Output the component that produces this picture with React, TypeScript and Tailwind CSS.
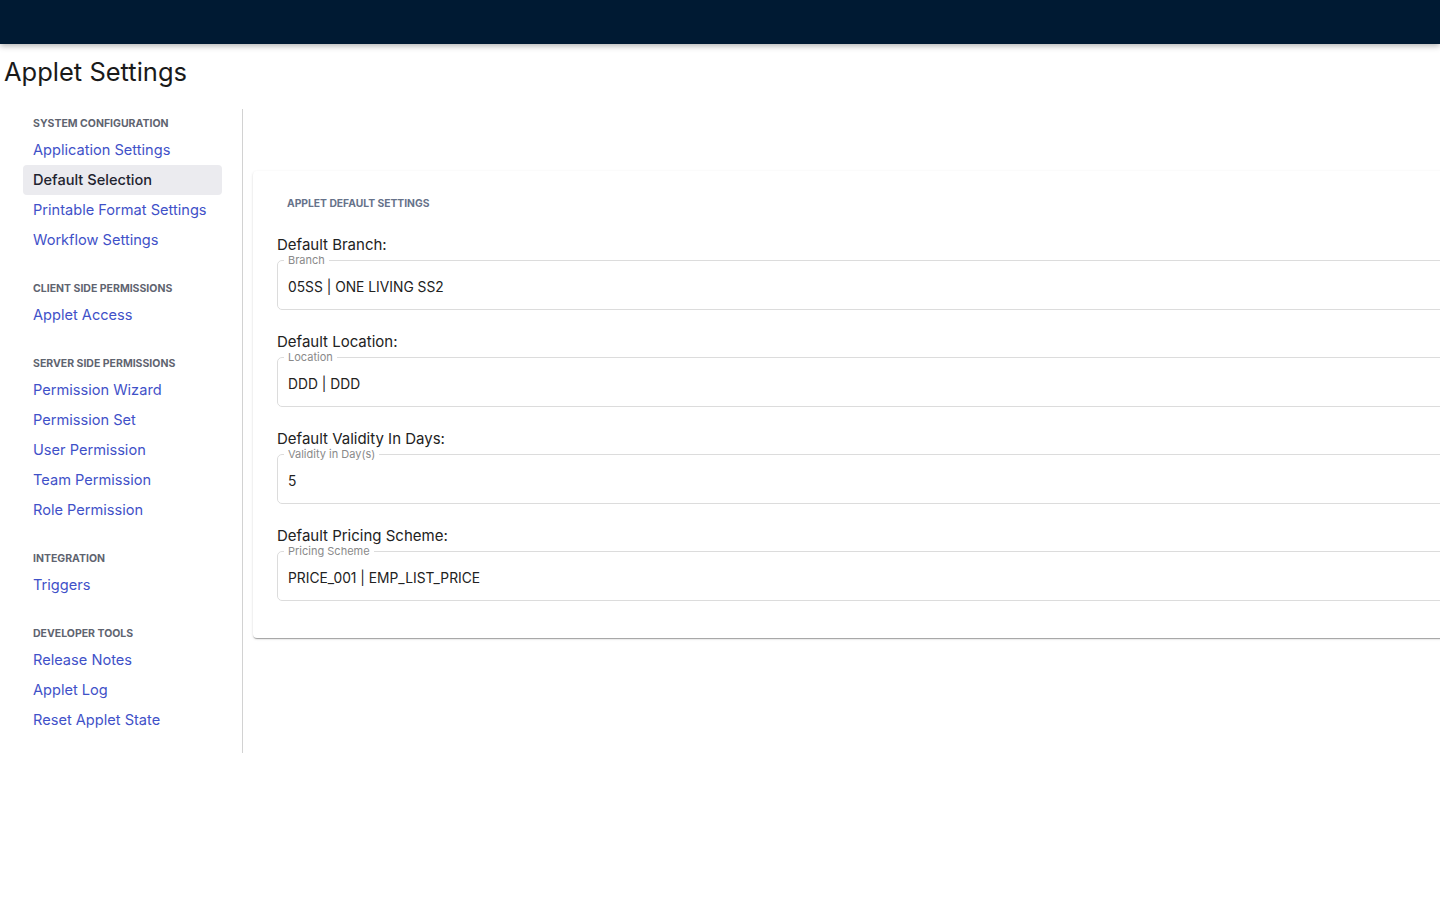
import React from 'react';

type NavSection = {
  title: string;
  items: string[];
};

const navSections: NavSection[] = [
  {
    title: 'System Configuration',
    items: ['Application Settings', 'Default Selection', 'Printable Format Settings', 'Workflow Settings'],
  },
  { title: 'Client Side Permissions', items: ['Applet Access'] },
  {
    title: 'Server Side Permissions',
    items: ['Permission Wizard', 'Permission Set', 'User Permission', 'Team Permission', 'Role Permission'],
  },
  { title: 'Integration', items: ['Triggers'] },
  { title: 'Developer Tools', items: ['Release Notes', 'Applet Log', 'Reset Applet State'] },
];

const fields = [
  { label: 'Default Branch:', legend: 'Branch', value: '05SS | ONE LIVING SS2' },
  { label: 'Default Location:', legend: 'Location', value: 'DDD | DDD' },
  { label: 'Default Validity In Days:', legend: 'Validity in Day(s)', value: '5' },
  { label: 'Default Pricing Scheme:', legend: 'Pricing Scheme', value: 'PRICE_001 | EMP_LIST_PRICE' },
];

const ACTIVE = 'Default Selection';

const App = () => {
  return (
    <div className="min-h-[900px] w-full overflow-hidden bg-white font-['Inter',sans-serif] text-[#212121]">
      {/* top bar */}
      <div className="relative z-10 h-[44px] bg-[#001a33] shadow-[0_2px_6px_rgba(0,0,0,0.3)]" />

      {/* page title */}
      <div className="h-[65px] pl-[4px] pt-[12px]">
        <h1 className="text-[25.5px] leading-[32px] font-normal text-[#1a1a1a]">Applet Settings</h1>
      </div>

      <div className="flex items-start">
        {/* sidebar */}
        <nav className="w-[243px] shrink-0 border-r border-[#d2d2d2] pt-[7px] pb-[18px] pl-[23px] pr-[20px]">
          <div className="flex flex-col gap-[26px]">
            {navSections.map((section) => (
              <div key={section.title}>
                <div className="mb-[3px] h-[16px] px-[10px] text-[10.5px] leading-[16px] font-bold uppercase text-[#5f6470]">
                  {section.title}
                </div>
                {section.items.map((item) => (
                  <div
                    key={item}
                    className={
                      item === ACTIVE
                        ? 'h-[30px] rounded-[4px] bg-[#ebebef] px-[10px] text-[14.6px] leading-[30px] font-medium text-[#1f2430]'
                        : 'h-[30px] px-[10px] text-[14.6px] leading-[30px] text-[#3f51c8]'
                    }
                  >
                    {item}
                  </div>
                ))}
              </div>
            ))}
          </div>
        </nav>

        {/* content */}
        <div className="ml-[10px] mt-[62px] w-[1300px] shrink-0">
          <div className="rounded-[4px] bg-white pt-[25px] pb-[37px] pl-[24px] shadow-[0_2px_1px_-1px_rgba(0,0,0,0.2),0_1px_1px_0_rgba(0,0,0,0.14),0_1px_3px_0_rgba(0,0,0,0.12)]">
            <div className="ml-[10px] text-[10.3px] leading-[14px] font-bold uppercase text-[#66728a]">
              Applet Default Settings
            </div>
            <div className="mt-[26px] flex flex-col gap-[23px]">
              {fields.map((f) => (
                <div key={f.label}>
                  <div className="text-[15px] leading-[18px] text-[#222]">{f.label}</div>
                  <fieldset className="h-[56px] rounded-[5px] border border-[#dcdcdc] px-[6px]">
                    <legend className="px-[4px] text-[11px] leading-[12px] text-[#8a8a8a]">{f.legend}</legend>
                    <div className="mt-[13px] pl-[4px] text-[13.8px] leading-[16px] text-[#222]">{f.value}</div>
                  </fieldset>
                </div>
              ))}
            </div>
          </div>
        </div>
      </div>
    </div>
  );
};

export default App;
